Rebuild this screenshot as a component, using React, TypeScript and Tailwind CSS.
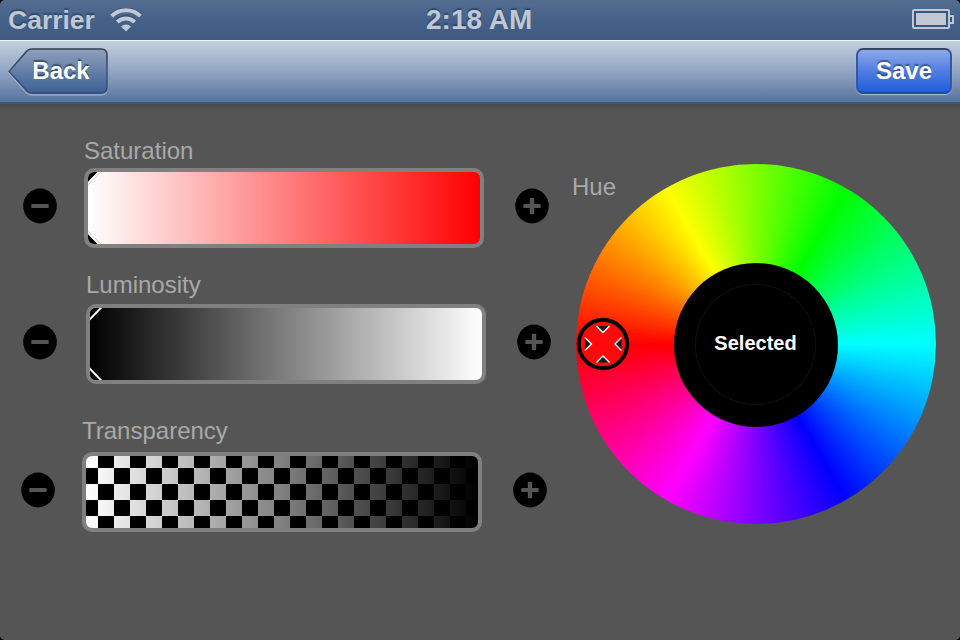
import React from "react";

type Sign = "minus" | "plus";

function StepButton({ sign }: { sign: Sign }) {
  return (
    <button className="mb-1 h-9 w-[34px] shrink-0" aria-label={sign}>
      <svg width="34" height="36" viewBox="0 0 34 36" className="block">
        <ellipse cx="17" cy="18" rx="16.8" ry="17.4" fill="#000" />
        <rect x="8.3" y="15.9" width="17.4" height="4.2" rx="0.8" fill="#555" />
        {sign === "plus" && <rect x="14.8" y="9.8" width="4.4" height="16.4" rx="0.8" fill="#555" />}
      </svg>
    </button>
  );
}

/* The edges of the value marker that show in the left corners of a bar. */
function CornerMarks() {
  return (
    <svg width="16" height="72" viewBox="0 0 16 72" className="block">
      <path d="M0 0H10L0 10.5ZM0 72H10L0 61.5Z" fill="#000" />
      <path d="M13.4 -1L-1 13.7M13.4 73L-1 58.3" stroke="#000" strokeOpacity="0.35" strokeWidth="0.7" />
      <path d="M11.8 -1L-1 12.2M11.8 73L-1 59.8" stroke="#fff" strokeWidth="2" />
    </svg>
  );
}

function Label({ children }: { children: React.ReactNode }) {
  return <div className="h-6 text-2xl leading-6 text-[#a9a9a9]">{children}</div>;
}

function StatusBar() {
  return (
    <div className="flex h-10 items-center justify-between bg-linear-to-b/srgb from-[#546e8f] via-[#46628a] via-50% to-[#3d5a80] pr-1.5 pl-2 font-bold text-[#bfc8d4] [text-shadow:0_-2px_1px_rgba(20,40,70,0.45)]">
      <div className="flex w-[418px] items-center gap-[15px]">
        <span className="text-[26.5px] leading-10">Carrier</span>
        <svg width="32" height="24" viewBox="0 0 32 24" className="block">
          <g fill="none" stroke="#2c4568" strokeOpacity="0.7" strokeWidth="4">
            <path d="M1.6 7.2A20.5 20.5 0 0 1 30.4 7.2" />
            <path d="M7.3 12.6A12.5 12.5 0 0 1 24.7 12.6" />
          </g>
          <g fill="none" stroke="#bfc8d4" strokeWidth="4">
            <path d="M1.6 8.2A20.5 20.5 0 0 1 30.4 8.2" />
            <path d="M7.3 14A12.5 12.5 0 0 1 24.7 14" />
          </g>
          <path d="M11 18.4Q16 14.4 21 18.4L16 23.4Z" fill="#bfc8d4" />
        </svg>
      </div>
      <span className="text-[28px] leading-10">2:18 AM</span>
      <div className="flex flex-1 justify-end">
        <svg width="42" height="22" viewBox="0 0 42 22" className="block">
          <path d="M0 -0.5H38V5H42V14H37V20H0Z" fill="#2c4568" fillOpacity="0.6" />
          <rect x="1" y="1" width="36" height="18" rx="1" fill="#3a557c" stroke="#bfc8d4" strokeWidth="2" />
          <rect x="4" y="4" width="30" height="12" fill="#bfc8d4" />
          <path d="M38 7H41V14H38" fill="#3a557c" stroke="#bfc8d4" strokeWidth="2" />
        </svg>
      </div>
    </div>
  );
}

function NavBar() {
  return (
    <div className="flex h-16 items-start justify-between border-t border-b-2 border-t-[#edf1f5] border-b-[#375680] bg-linear-to-b/srgb from-[#c3cfdf] via-[#92a5c3] via-50% to-[#57739b] px-2 pt-[7px] text-2xl font-bold text-white">
      <button className="relative h-12 w-[100px]">
        <svg width="100" height="48" viewBox="0 0 100 48" className="block">
          <defs>
            <linearGradient id="backFill" x1="0" y1="0" x2="0" y2="1">
              <stop offset="0" stopColor="#8fa1bc" />
              <stop offset="0.5" stopColor="#6480a9" />
              <stop offset="1" stopColor="#3b5e93" />
            </linearGradient>
            <linearGradient id="backEdge" x1="0" y1="0" x2="0" y2="1">
              <stop offset="0" stopColor="#35404e" />
              <stop offset="0.5" stopColor="#3c5578" />
              <stop offset="1" stopColor="#2e4a75" />
            </linearGradient>
          </defs>
          <path d="M24 2.5H93Q99 2.5 99 8.5V41Q99 47 93 47H24Q20 47 17.5 43.5L1 25L17.5 6Q20 2.5 24 2.5Z" fill="none" stroke="#c9d5e6" strokeOpacity="0.5" strokeWidth="1.5" />
          <path d="M24 1H93Q99 1 99 7V39Q99 45 93 45H24Q20 45 17.5 41.5L1 23.5L17.5 4.5Q20 1 24 1Z" fill="url(#backFill)" stroke="url(#backEdge)" strokeWidth="1.6" />
        </svg>
        <span className="absolute inset-0 pl-[6px] text-center leading-[46px] [text-shadow:0_-2px_1px_rgba(30,45,70,0.6)]">Back</span>
      </button>
      <button className="h-[46px] w-24 rounded-[7px] border-2 border-t-[#33456b] border-r-[#3558a4] border-b-[#2148a2] border-l-[#3558a4] bg-linear-to-b/srgb from-[#8dabea] via-[#4f7de2] via-50% to-[#205edc] text-center leading-[42px] shadow-[0_1px_1px_rgba(205,218,238,0.7)] [text-shadow:0_-2px_1px_rgba(30,45,90,0.55)]">
        Save
      </button>
    </div>
  );
}

function Picker() {
  return (
    <svg width="54" height="54" viewBox="0 0 54 54" className="absolute top-[153px] left-0">
      <circle cx="27" cy="27" r="24.2" fill="#ff0a0a" stroke="#000" strokeWidth="4" />
      <g fill="#1a1a1a">
        <path d="M20.5 9H33.5L27 15.5Z" />
        <path d="M20.5 45.5H33.5L27 39Z" />
        <path d="M9 20.5V33.5L15.5 27Z" />
        <path d="M45.5 20.5V33.5L39 27Z" />
      </g>
      <g fill="none" stroke="#fff" strokeWidth="1.3">
        <path d="M20.5 9L27 15.5L33.5 9" />
        <path d="M20.5 45.5L27 39L33.5 45.5" />
        <path d="M9 20.5L15.5 27L9 33.5" />
        <path d="M45.5 20.5L39 27L45.5 33.5" />
      </g>
    </svg>
  );
}

export default function App() {
  return (
    <div className="h-[640px] w-[960px] bg-black font-['Liberation_Sans',Arial,sans-serif]">
      <div className="flex h-full flex-col overflow-hidden rounded-[5px] bg-[#555]">
        <StatusBar />
        <NavBar />
        <main className="flex flex-1 bg-linear-to-b/srgb from-[#484848] from-0% to-[#555] to-[6px]">
          <div className="flex w-[572px] flex-col pt-[35px]">
            <section>
              <div className="pl-[84px]"><Label>Saturation</Label></div>
              <div className="mt-[5px] flex items-center pl-[23px]">
                <StepButton sign="minus" />
                <div className="mr-[31px] ml-[27px] h-20 w-[400px] overflow-hidden rounded-[10px] border-4 border-[#808080] bg-linear-to-r/srgb from-white to-[#f00]">
                  <CornerMarks />
                </div>
                <StepButton sign="plus" />
              </div>
            </section>
            <section className="mt-[25px]">
              <div className="pl-[86px]"><Label>Luminosity</Label></div>
              <div className="mt-[7px] flex items-center pl-[23px]">
                <StepButton sign="minus" />
                <div className="mr-[31px] ml-[29px] h-20 w-[400px] overflow-hidden rounded-[10px] border-4 border-[#808080] bg-linear-to-r/srgb from-black to-white">
                  <CornerMarks />
                </div>
                <StepButton sign="plus" />
              </div>
            </section>
            <section className="mt-[35px]">
              <div className="pl-[82px]"><Label>Transparency</Label></div>
              <div className="mt-[9px] flex items-center pl-[21px]">
                <StepButton sign="minus" />
                <div className="mr-[31px] ml-[27px] h-20 w-[400px] rounded-[10px] border-4 border-[#808080] [background-image:linear-gradient(to_right,transparent,#000),repeating-conic-gradient(#000_0_25%,#fff_0_50%)] [background-size:100%_100%,32px_32px] [background-position:0_0,-4px_-4px]" />
                <StepButton sign="plus" />
              </div>
            </section>
          </div>
          <div className="relative w-[388px]">
            <div className="pt-[71px]"><Label>Hue</Label></div>
            <div className="absolute top-[60px] left-1 flex size-[360px] items-center justify-center rounded-full bg-[conic-gradient(from_270deg,#f00,#ff0,#0f0,#0ff,#00f,#f0f,#f00)]">
              <div className="mt-px mr-px flex size-[164px] items-center justify-center rounded-full bg-black">
                <div className="mb-px flex size-[121px] items-center justify-center rounded-full border border-dotted border-[#222] pb-[2px] text-xl leading-5 font-bold text-white">
                  Selected
                </div>
              </div>
              <Picker />
            </div>
          </div>
        </main>
      </div>
    </div>
  );
}
